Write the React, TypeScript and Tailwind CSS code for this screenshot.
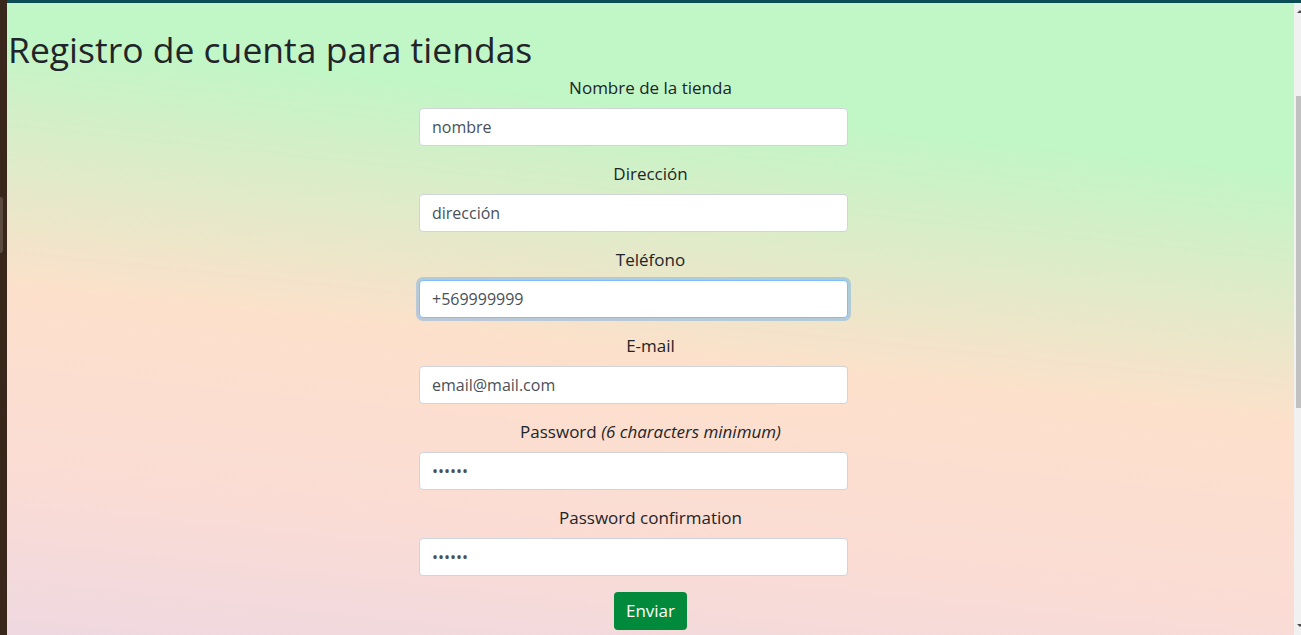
import React from 'react'

const fields = [
    { label: 'Nombre de la tienda', value: 'nombre', type: 'text' },
    { label: 'Dirección', value: 'dirección', type: 'text' },
    { label: 'Teléfono', value: '+569999999', type: 'text', focus: true },
    { label: 'E-mail', value: 'email@mail.com', type: 'text' },
    { label: 'Password', hint: '(6 characters minimum)', value: '123456', type: 'password' },
    { label: 'Password confirmation', value: '123456', type: 'password' },
]

function Field({ field }) {
    return (
        <div className="mb-4">
            <label className="block h-6 mb-2 text-center text-[17px] leading-6 text-[#212529]">
                {field.label} {field.hint && <em>{field.hint}</em>}
            </label>
            <div className="pl-[412px]">
                <input
                    type={field.type}
                    defaultValue={field.value}
                    readOnly
                    className={
                        field.focus
                            ? 'block w-[429px] h-[38px] px-3 rounded bg-white border border-[#80bdff] shadow-[0_0_0_3px_rgba(0,123,255,0.25)] text-[16px] text-[#495057] outline-none'
                            : 'block w-[429px] h-[38px] px-3 rounded bg-white border border-[#ced4da] text-[16px] text-[#495057] outline-none'
                    }
                />
            </div>
        </div>
    )
}

export default function App() {
    return (
        <div className="flex w-[1301px] h-[635px] overflow-hidden font-['Open_Sans',sans-serif]">
            <div className="relative w-[7px] bg-[#3a271b]">
                <div className="absolute left-0 top-[197px] w-[3px] h-[56px] rounded-r bg-[#5b4a40]" />
            </div>

            <div className="flex flex-col flex-1">
                <div className="h-[3px] bg-[#0c4d55]" />

                <div className="flex flex-1">
                    <main className="flex-1 bg-[linear-gradient(186deg,#c1f6c6_22%,#fde0cb_55%,#fadcd5_80%,#efd8e0_100%)]">
                        <h1 className="mt-[25px] mb-[6px] pl-[1px] text-[35.5px] leading-[42px] text-[#212529]">
                            Registro de cuenta para tiendas
                        </h1>

                        <form>
                            {fields.map((f) => (
                                <Field key={f.label} field={f} />
                            ))}
                            <div className="flex justify-center">
                                <button
                                    type="button"
                                    className="h-[38px] px-3 rounded bg-[#018a3b] text-white text-[17px]"
                                >
                                    Enviar
                                </button>
                            </div>
                        </form>
                    </main>

                    <div className="relative w-[7px] bg-[#f1f1f1]">
                        <div className="absolute top-[7px] left-[3px] w-0 h-0 border-x-[3px] border-x-transparent border-b-[3px] border-b-[#505050]" />
                        <div className="absolute top-[93px] left-[2px] w-[5px] h-[312px] bg-[#c1c1c1]" />
                        <div className="absolute bottom-[8px] left-[3px] w-0 h-0 border-x-[3px] border-x-transparent border-t-[3px] border-t-[#505050]" />
                    </div>
                </div>
            </div>
        </div>
    )
}
